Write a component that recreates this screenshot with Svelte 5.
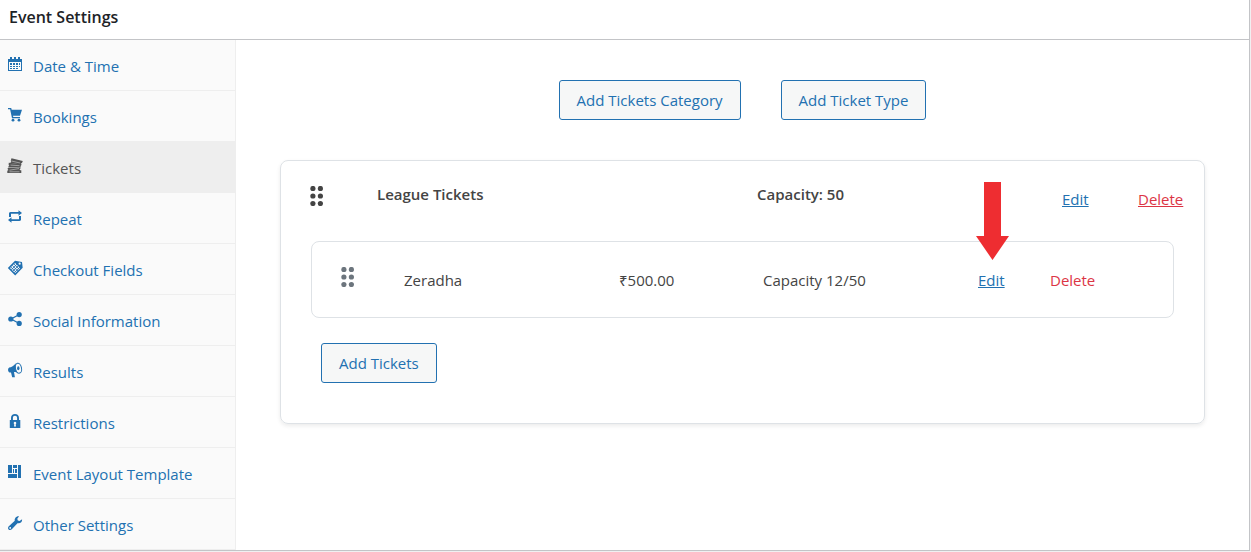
<script lang="ts">
    type Tab = { id: string; label: string };

    const tabs: Tab[] = [
        { id: 'calendar', label: 'Date & Time' },
        { id: 'cart', label: 'Bookings' },
        { id: 'tickets', label: 'Tickets' },
        { id: 'repeat', label: 'Repeat' },
        { id: 'fields', label: 'Checkout Fields' },
        { id: 'share', label: 'Social Information' },
        { id: 'megaphone', label: 'Results' },
        { id: 'lock', label: 'Restrictions' },
        { id: 'layout', label: 'Event Layout Template' },
        { id: 'wrench', label: 'Other Settings' }
    ];

    const category = {
        name: 'League Tickets',
        capacity: 50,
        tickets: [{ name: 'Zeradha', price: '₹500.00', booked: 12, capacity: 50 }]
    };

    let active = $state('tickets');
</script>

{#snippet handle()}
    <svg class="handle" viewBox="0 0 14 20" aria-hidden="true">
        {#each [2.5, 10, 17.5] as y}
            <circle cx="2.9" cy={y} r="2.6" />
            <circle cx="10.4" cy={y} r="2.6" />
        {/each}
    </svg>
{/snippet}

{#snippet icon(id: string)}
    <svg class="icon" viewBox="0 0 16 16" aria-hidden="true">
        {#if id === 'calendar'}
            <path fill-rule="evenodd" d="M1 3h2V1h2v2h2V1h2v2h2V1h2v2h2v12H1zM2 6v8h12V6z" />
            <path d="M3 7h2v2H3zM6 7h2v2H6zM9 7h2v2H9zM12 7h1v2h-1zM3 10h2v1H3zM6 10h2v1H6zM9 10h2v1H9zM12 10h1v1h-1zM3 12h2v1H3zM6 12h2v1H6zM9 12h2v1H9z" />
        {:else if id === 'cart'}
            <path d="M1 1h3.2l.5 1.8H15L13 8.8H6l.3 1.2H13v1.2H5L3.1 2.2H1z" />
            <circle cx="6" cy="13.2" r="1.4" />
            <circle cx="12" cy="13.2" r="1.4" />
        {:else if id === 'tickets'}
            <path d="M4.5.3 15.8 3l-.9 2.2-1 .1v1.200L3.300 4.800l.9-1.300-.4-.9z" />
            <path d="m1.800 4.700 12.700 1.400-.3 1.300-.8.500.5 1.200-12.600.4.300-1.500.7-.7-.7-.6z" />
            <path d="m.8 9.900 12.800-.7-.2 1.500-.9.600.8.900 1 .1v2.700H.3v-2.200l1.100-.9-.8-.8z" />
            <path class="cut" d="M4.500 3 13 5M3.500 7.100l9 .6M2.500 12.200l9.500-1.600M2.500 13.800h10" />
        {:else if id === 'repeat'}
            <path d="M3.500 3h8V1.300L15 4l-3.500 2.700V4.800H4V8H2V3.800zM12 7h2v4.200l-1.500.8h-8v1.700L1 11l3.500-2.700v1.900H12z" />
        {:else if id === 'fields'}
            <path fill-rule="evenodd" d="M.8 8 8 .8 15 2l.7 5.700L8.200 15.400zM3 8.100l5.200 5.100 5-5-5.100-5.100zM12.600 2.600a1.100 1.100 0 1 0 .1 2.200 1.100 1.100 0 0 0-.1-2.200z" />
            <path class="line" d="m3.800 7 5.600 5.600M5.300 5.500l5.700 5.700M6.900 4l5.700 5.700M4.300 9.800l5.700-5.700M5.800 11.300l5.700-5.700M7.300 12.800 13 7.100" />
        {:else if id === 'share'}
            <path class="stroke" d="M12.400 3.500 4 8l8.400 4.500" />
            <circle cx="12.2" cy="3.600" r="2.600" />
            <circle cx="3.800" cy="8" r="2.600" />
            <circle cx="12.200" cy="12.400" r="2.600" />
        {:else if id === 'megaphone'}
            <path d="M8.500 1.200C6.500 4.800 3.700 5 2.400 5.500.7 6.200.6 9 2 10.200c.7.500 1.500.3 2 .3l1.200 4.700h2.700L7 10.100c1.200-.1 2.700.3 4 1.500z" />
            <ellipse class="ring" cx="11.500" cy="6.200" rx="3" ry="5" transform="rotate(-12 11.5 6.2)" />
            <ellipse cx="11.300" cy="6.200" rx="1.200" ry="2" />
        {:else if id === 'lock'}
            <path fill-rule="evenodd" d="M2.800 7H4V4.900C4 2.400 5.700.9 8 .9s4 1.500 4 4V7h1.300v8H2.800zM5.900 7h4.200V5c0-1.400-.8-2.200-2.100-2.200S5.900 3.600 5.900 5zM8 8.800a1.300 1.300 0 0 0-.7 2.400L7 13.500h2l-.3-2.300A1.300 1.300 0 0 0 8 8.800z" />
        {:else if id === 'layout'}
            <path d="M1 1h4v8H1zM6 1h4v3H6zM6 5h1v4H6zM8 5h2v4H8zM1 10h9v4H1zM11 1h3v13h-3z" />
        {:else if id === 'wrench'}
            <path fill-rule="evenodd" d="M15.100 4.200c.3 2.800-2 4.700-4.600 4L4.800 14.300c-1 .9-2.300 1-3.200.2-.8-.9-.7-2.200.2-3.200l6-5.500c-.7-2.500 1.500-5 4.300-4.600L10.300 3.700l.5 1.700 1.800.5zM3.200 12a.9.9 0 1 0 0 1.800.9.9 0 0 0 0-1.800z" />
        {/if}
    </svg>
{/snippet}

<section class="panel">
    <h2>Event Settings</h2>

    <div class="body">
        <nav>
            {#each tabs as tab}
                <a
                    href="#{tab.id}"
                    class:active={active === tab.id}
                    onclick={() => (active = tab.id)}
                >
                    {@render icon(tab.id)}
                    <span>{tab.label}</span>
                </a>
            {/each}
        </nav>

        <main>
            <div class="toolbar">
                <button type="button">Add Tickets Category</button>
                <button type="button">Add Ticket Type</button>
            </div>

            <div class="category">
                <div class="category-head">
                    {@render handle()}
                    <strong>{category.name}</strong>
                    <strong>Capacity: {category.capacity}</strong>
                    <a href="#edit-category">Edit</a>
                    <a href="#delete-category" class="delete">Delete</a>
                </div>

                {#each category.tickets as ticket, i}
                    <div class="ticket">
                        {@render handle()}
                        <span>{ticket.name}</span>
                        <span>{ticket.price}</span>
                        <span>Capacity {ticket.booked}/{ticket.capacity}</span>
                        <span class="edit">
                            <a href="#edit-ticket">Edit</a>
                            {#if i === 0}
                                <svg class="arrow" viewBox="0 0 33 78" aria-hidden="true">
                                    <path d="M8 0h17v54h8L16.500 78 0 54h8z" />
                                </svg>
                            {/if}
                        </span>
                        <a href="#delete-ticket" class="delete plain">Delete</a>
                    </div>
                {/each}

                <div class="category-foot">
                    <button type="button">Add Tickets</button>
                </div>
            </div>
        </main>
    </div>
</section>

<style>
    :global(body) {
        margin: 0;
        background: #f0f0f1;
    }

    .panel {
        margin-right: 1px;
        margin-bottom: 1px;
        border: 1px solid #c3c4c7;
        border-width: 0 1px 1px 0;
        background: #fff;
        color: #444;
        font-family: 'Segoe UI', 'Open Sans', 'Noto Sans', sans-serif;
        font-size: 15px;
        line-height: 24px;
    }

    h2 {
        margin: 0;
        padding: 5px 9px 10px;
        border-bottom: 1px solid #c3c4c7;
        color: #1d2327;
        font-size: 16px;
        font-weight: 600;
    }

    .body {
        display: flex;
    }

    a {
        color: #2271b1;
    }

    nav {
        flex: 0 0 235px;
        border-right: 1px solid #eee;
        background: #fafafa;
    }

    nav a {
        display: flex;
        gap: 10px;
        padding: 14px 7px 12px;
        border-bottom: 1px solid #eee;
        text-decoration: none;
    }

    nav a.active {
        background: #eee;
        color: #555;
    }

    .icon {
        width: 16px;
        height: 16px;
        margin-top: 2px;
        fill: currentColor;
    }

    .icon .cut {
        fill: none;
        stroke: #eee;
        stroke-width: 0.5;
    }

    .icon .line {
        fill: none;
        stroke: currentColor;
        stroke-width: 0.9;
    }

    .icon .stroke {
        fill: none;
        stroke: currentColor;
        stroke-width: 1.3;
    }

    .icon .ring {
        fill: #fafafa;
        stroke: currentColor;
        stroke-width: 1;
    }

    main {
        flex: 1;
        min-width: 0;
        padding: 40px 44px;
    }

    .toolbar {
        display: flex;
        justify-content: center;
        gap: 40px;
        margin-bottom: 40px;
    }

    button {
        padding: 7px 17px;
        border: 1px solid #2271b1;
        border-radius: 3px;
        background: #f6f7f7;
        color: #2271b1;
        font: inherit;
        cursor: pointer;
    }

    .category {
        border: 1px solid #dee2e6;
        border-radius: 8px;
        box-shadow: 0 2px 4px rgba(0, 0, 0, 0.08);
    }

    .category-head {
        display: grid;
        grid-template-columns: 67px 380fr 305fr 76px 46px;
        padding: 21px 20px 30px 29px;
    }

    .category-head strong {
        font-weight: 600;
    }

    .category-head a {
        margin-top: 5px;
    }

    .handle {
        width: 14px;
        height: 20px;
        margin-top: 4px;
        fill: #444;
    }

    .ticket {
        display: grid;
        grid-template-columns: 63px 215fr 144fr 215fr 72px 123fr;
        margin: 0 30px;
        padding: 26px 0 25px 29px;
        border: 1px solid #dee2e6;
        border-radius: 8px;
    }

    .ticket .handle {
        margin-top: -1px;
        fill: #6c757d;
    }

    .edit {
        position: relative;
    }

    .arrow {
        position: absolute;
        bottom: 32px;
        left: -2px;
        width: 33px;
        height: 78px;
        fill: #ee2d31;
        pointer-events: none;
    }

    .delete {
        color: #dc3545;
    }

    .plain {
        text-decoration: none;
    }

    .category-foot {
        padding: 25px 40px 40px;
    }
</style>
